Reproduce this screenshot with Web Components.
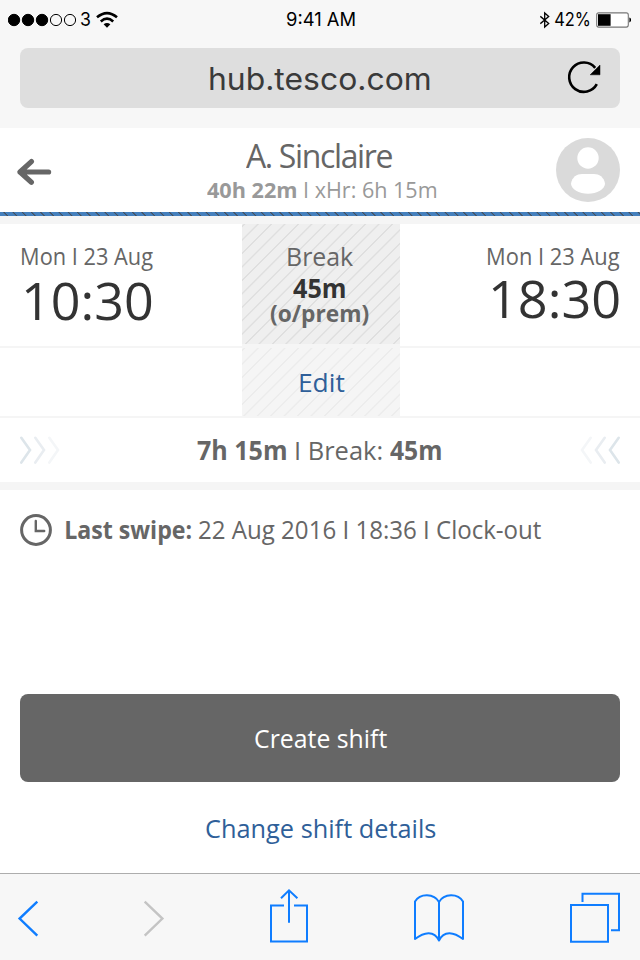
<!DOCTYPE html>
<html lang="en">
<head>
<meta charset="utf-8">
<title>Shift</title>
<style>
html,body{margin:0;padding:0;background:#fff}
body{width:640px;height:960px;overflow:hidden;font-family:"Open Sans","Noto Sans",sans-serif;color:#666}
</style>
</head>
<body>
<shift-app></shift-app>
<script>
const define = (name, html) => customElements.define(name, class extends HTMLElement {
  constructor() {
    super();
    this.attachShadow({ mode: 'open' }).innerHTML = html;
  }
});

/* A single line of text whose visible ink spans exactly `w` pixels; `track` is its letter-spacing. */
customElements.define('fit-label', class extends HTMLElement {
  connectedCallback() {
    if (this.shadowRoot) return;
    const size = +this.getAttribute('size'), w = +this.getAttribute('w');
    const weight = this.getAttribute('weight') || '400';
    const track = (this.getAttribute('track') || '0') + 'px';
    const family = this.getAttribute('face') === 'ui' ? 'Inter, sans-serif' : '"Open Sans", "Noto Sans", sans-serif';
    const ctx = document.createElement('canvas').getContext('2d');
    ctx.font = `${weight} ${size}px ${family}`;
    ctx.letterSpacing = track;
    const m = ctx.measureText(this.textContent);
    const scale = w / (m.actualBoundingBoxRight + m.actualBoundingBoxLeft);
    const shift = m.actualBoundingBoxLeft * scale;
    this.attachShadow({ mode: 'open' }).innerHTML = `
      <style>
        :host{display:block;flex:none;width:${w}px;height:${size}px}
        span{display:block;width:max-content;white-space:nowrap;font:${weight} ${size}px/${size}px ${family};letter-spacing:${track};transform-origin:0 0;
          transform:translateX(${shift}px) scaleX(${scale})}
      </style><span><slot></slot></span>`;
  }
});

define('status-bar', `
<style>
:host{display:grid;grid-template-columns:279px 1fr auto;height:38px;padding:10px 9px 0 8px;box-sizing:border-box;color:#000}
div{display:flex;align-items:flex-start}
svg{display:block;flex:none}
</style>
<div>
  <svg width="73" height="20" viewBox="8 10 73 20"><g stroke="#000" stroke-width="1"><circle cx="14" cy="20" r="5.7"/><circle cx="28" cy="20" r="5.7"/><circle cx="42" cy="20" r="5.7"/><circle cx="56" cy="20" r="5.6" fill="none"/><circle cx="70" cy="20" r="5.6" fill="none"/></g></svg>
  <fit-label face="ui" size="19" w="9.3">3</fit-label>
  <svg width="30" height="20" viewBox="90 10 30 20"><g fill="none" stroke="#000" stroke-width="2.6"><path d="M97 17.3Q107 8.8 117 17.3"/><path d="M100.8 21.5Q107 15.8 113.2 21.5"/></g><path d="M103.6 24.2Q107 21.6 110.4 24.2L107 27.8Z"/></svg>
</div>
<div><fit-label face="ui" size="19" w="68">9:41 AM</fit-label></div>
<div>
  <svg width="15" height="20" viewBox="540.5 10 15 20"><path d="M540.8 16.3L549.2 23.5L545.2 27V13L549.2 16.6L540.8 23.7" fill="none" stroke="#000" stroke-width="1.3"/></svg>
  <fit-label face="ui" size="19" w="34.5">42%</fit-label>
  <svg width="41.5" height="20" viewBox="590 10 41.5 20"><rect x="596.7" y="12.9" width="31.6" height="14.2" rx="2" fill="#fff" stroke="#777" stroke-width="1.1"/><rect x="598" y="14.2" width="12.6" height="11.6"/><path d="M629.4 17.5Q631.5 18.5 631.2 20T629.4 22.5Z"/></svg>
</div>`);

define('address-bar', `
<style>
:host{display:flex;justify-content:space-between;align-items:flex-start;margin:10px 20px 20px;height:60px;border-radius:8px;background:#dedede;color:#3a3a3a;padding:15px 16px 0 190px;box-sizing:border-box}
svg{display:block;margin-top:-5px}
</style>
<fit-label face="ui" size="31" w="219.5">hub.tesco.com</fit-label>
<svg width="40" height="40" viewBox="564 58 40 40"><path d="M596.8 84.2A14.7 14.7 0 1 1 595.2 67.8" fill="none" stroke="#000" stroke-width="2.6"/><path d="M600 65V74.8H590.2Z" stroke="#000" stroke-width=".5"/></svg>`);

define('profile-header', `
<style>
:host{display:flex;justify-content:space-between;height:84px;background:#fff;padding:10px 20px 0 16px;box-sizing:border-box}
svg{display:block}
.mid{margin-left:34px;display:flex;flex-direction:column}
.name{margin:1px 0 0 38.5px}
.sub{display:flex;gap:8.5px;color:#999;margin-top:6px}
</style>
<svg width="37" height="64" viewBox="16 138 37 64"><path d="M31.4 161.6L20 172L31.4 182.2M20 172H48.6" fill="none" stroke="#666" stroke-width="5.2" stroke-linecap="round" stroke-linejoin="round"/></svg>
<div class="mid">
  <fit-label class="name" size="33" track="-1.4" w="146">A. Sinclaire</fit-label>
  <div class="sub"><fit-label size="22" weight="700" w="89">40h 22m</fit-label><fit-label size="22" w="131.3">I xHr: 6h 15m</fit-label></div>
</div>
<svg width="64" height="64" viewBox="556 138 64 64"><circle cx="588" cy="170" r="32" fill="#dadada"/><circle cx="588" cy="158" r="10.7" fill="#fff"/><path d="M571 183.5C572 177 577 174 582 174H594C599 174 604 177 605 183.5C605 189 597 193.7 588 193.7S571 189 571 183.5Z" fill="#fff"/></svg>`);

define('stripe-rule', `
<style>:host{display:block;height:4px;border-bottom:8px solid #f5f5f5;
background:repeating-linear-gradient(45deg,#4580bd 0 4.6px,#46505c 5.2px 5.7px,#4580bd 6.3px 6.5px) padding-box}</style>`);

define('shift-times', `
<style>
:host{display:grid;grid-template-columns:242px 158px 240px;height:122px;border-bottom:2px solid #f5f5f5}
.side{display:flex;flex-direction:column;padding:21px 0 0 21.5px}
.end{align-items:flex-end;padding:21px 20px 0 0}
.time{color:#333}
.brk{height:122px;display:flex;flex-direction:column;align-items:flex-start;padding:19px 0 0;box-sizing:border-box;border-bottom:2px solid #f5f5f5;
background:repeating-linear-gradient(135deg,#efefef 0 .9px,#dfdfdf 1.5px 2.3px,#efefef 2.9px 9.5px) padding-box}
</style>
<div class="side"><fit-label size="23" w="131.5">Mon I 23 Aug</fit-label><fit-label class="time" style="margin:6px 0 0 3px" size="52" w="127">10:30</fit-label></div>
<div class="brk"><fit-label size="26" w="65.5" style="margin-left:46px">Break</fit-label><fit-label size="26" weight="700" w="52" style="color:#333;margin:6px 0 0 51px">45m</fit-label><fit-label size="24" weight="700" w="99" style="margin-left:27.5px">(o/prem)</fit-label></div>
<div class="side end"><fit-label size="23" w="132">Mon I 23 Aug</fit-label><fit-label class="time" style="margin:4px 1px 0 0" size="52" w="127.5">18:30</fit-label></div>`);

define('edit-row', `
<style>
:host{display:flex;justify-content:center;height:68px;border-bottom:2px solid #f5f5f5}
div{width:158px;height:68px;margin-left:2px;display:flex;justify-content:center;align-items:flex-start;padding-top:21px;box-sizing:border-box;color:#2f5f99;
background:repeating-linear-gradient(135deg,#f5f5f5 0 .9px,#ececec 1.5px 2.3px,#f5f5f5 2.9px 9.5px)}
</style>
<div><fit-label size="26" w="44.5" style="margin-left:3px">Edit</fit-label></div>`);

const chevrons = cls => `<svg class="${cls}" width="42" height="32" viewBox="19 434 42 32"><g fill="none" stroke-width="2.6" stroke-linecap="round"><path d="M21.3 437.8L30 450L21.3 462.6" stroke="#dde5ea"/><path d="M35.3 437.8L44 450L35.3 462.6" stroke="#e9edf1"/><path d="M49.3 437.8L58 450L49.3 462.6" stroke="#f4f6f8"/></g></svg>`;
define('total-row', `
<style>
:host{display:flex;justify-content:space-between;padding:19px 19px 0;height:45px;border-bottom:8px solid #f5f5f5}
svg{display:block;margin-top:-3px}
.flip{transform:scaleX(-1)}
div{display:flex;gap:9px;margin-left:-2px}
</style>
${chevrons('')}
<div><fit-label size="26" weight="700" w="89">7h 15m</fit-label><fit-label size="26" w="85.3" style="margin-left:1px">I Break:</fit-label><fit-label size="26" weight="700" w="51">45m</fit-label></div>
${chevrons('flip')}`);

define('last-swipe', `
<style>
:host{display:flex;padding:24px 20px 0;height:180px}
svg{display:block;margin-right:14px}
fit-label{margin-top:3px}
</style>
<svg width="32" height="32" viewBox="20 514 32 32"><circle cx="36" cy="530" r="14.4" fill="none" stroke="#666" stroke-width="3"/><path d="M35.8 521V531H44.2" fill="none" stroke="#666" stroke-width="2.4" stroke-linecap="round"/></svg>
<fit-label size="25" weight="700" w="125">Last swipe:</fit-label><fit-label size="25" w="342.5" style="margin-left:8px">22 Aug 2016 I 18:36 I Clock-out</fit-label>`);

define('shift-actions', `
<style>
:host{display:flex;flex-direction:column;align-items:center;height:179px}
button{all:unset;box-sizing:border-box;width:600px;height:88px;border-radius:8px;background:#666;color:#fff;display:flex;justify-content:center;padding:31px 0 0 2px}
a{color:#2f5f99;margin:33px 0 0 2px;text-decoration:none}
</style>
<button><fit-label size="26" w="132">Create shift</fit-label></button>
<a><fit-label size="26" w="230">Change shift details</fit-label></a>`);

define('browser-toolbar', `
<style>
:host{display:flex;justify-content:space-between;height:58px;border-top:1px solid #adadad;background:#f7f7f7;padding:14px 19px 14px 17px}
svg{display:block;fill:none;stroke:#0f7dff;stroke-width:2}
</style>
<svg width="22" height="58" viewBox="17 888 22 58"><path d="M37.3 901.6L19.6 918.6L37.3 935.6" stroke-width="2.4"/></svg>
<svg width="22" height="58" viewBox="143 888 22 58"><path d="M144.7 901.6L162.4 918.6L144.7 935.6" stroke="#c4c4c4" stroke-width="2.4"/></svg>
<svg width="40" height="58" viewBox="269 888 40 58"><path d="M284 905.5H271V941.5H307V905.5H294M289 922.7V890.5M281 898.3L289 890.3L297.4 898.3"/></svg>
<svg width="52" height="58" viewBox="413 888 52 58"><path d="M439 940.5V902C434 893 420 893 415 901.5V939C424 932 434 930 439 940.5C444 930 454 932 463 939V901.5C458 893 444 893 439 902" stroke-linejoin="round"/></svg>
<svg width="52" height="58" viewBox="569 888 52 58"><path d="M571 905H608V941.7H571ZM582.5 902V893.7H619V930.3H611"/></svg>`);

define('shift-app', `
<style>
:host{display:flex;flex-direction:column;width:640px;height:960px;background:#fff}
header{background:#f7f7f7;height:128px;display:flow-root}
</style>
<header><status-bar></status-bar><address-bar></address-bar></header>
<profile-header></profile-header>
<stripe-rule></stripe-rule>
<shift-times></shift-times>
<edit-row></edit-row>
<total-row></total-row>
<last-swipe></last-swipe>
<shift-actions></shift-actions>
<browser-toolbar></browser-toolbar>`);
</script>
</body>
</html>
